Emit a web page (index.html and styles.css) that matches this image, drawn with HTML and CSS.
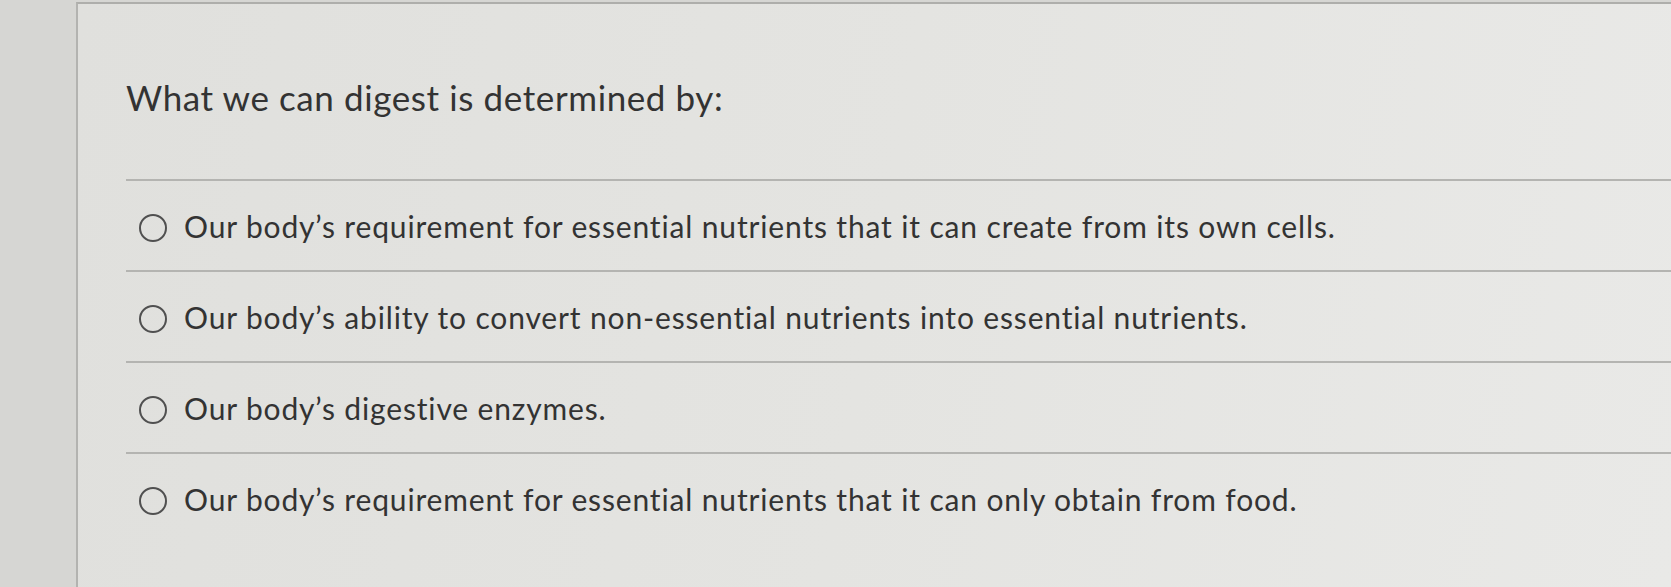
FILE: index.html
```html
<!DOCTYPE html>
<html lang="en">
<head>
<meta charset="utf-8">
<title>Question</title>
<link rel="stylesheet" href="styles.css">
</head>
<body>
<div class="page">
  <div class="panel">
    <h1 class="question">What we can digest is determined by:</h1>
    <ul class="options">
      <li class="option"><span class="radio"></span><span class="label">Our body’s requirement for essential nutrients that it can create from its own cells.</span></li>
      <li class="option"><span class="radio"></span><span class="label">Our body’s ability to convert non-essential nutrients into essential nutrients.</span></li>
      <li class="option"><span class="radio"></span><span class="label">Our body’s digestive enzymes.</span></li>
      <li class="option"><span class="radio"></span><span class="label">Our body’s requirement for essential nutrients that it can only obtain from food.</span></li>
    </ul>
  </div>
</div>
</body>
</html>
```

FILE: styles.css
```css
html, body {
  margin: 0;
  padding: 0;
  height: 100%;
}
body {
  background: #d6d6d3;
  font-family: Lato, "Liberation Sans", sans-serif;
  color: #333333;
  overflow: hidden;
}
.page {
  padding: 2px 0 0 76px;
  height: 100%;
  box-sizing: border-box;
}
.panel {
  height: 100%;
  background: linear-gradient(100deg, #e0e0dd 0%, #e4e4e1 50%, #e9e9e7 100%);
  border-left: 2px solid #b3b3b0;
  border-top: 2px solid #aeaeab;
  padding: 0 0 0 48px;
  box-sizing: border-box;
}
.question {
  margin: 0 0 61px 0;
  padding-top: 72px;
  font-size: 35px;
  line-height: 42px;
  font-weight: 400;
  letter-spacing: 0.6px;
  color: #333333;
}
.options {
  list-style: none;
  margin: 0;
  padding: 0;
}
.option {
  display: flex;
  align-items: center;
  gap: 17px;
  height: 91px;
  border-top: 2px solid #b4b4b1;
  box-sizing: border-box;
  padding: 0 0 0 13px;
}
.radio {
  flex: none;
  width: 24px;
  height: 24px;
  border: 2px solid #505050;
  border-radius: 50%;
  margin-top: 5px;
}
.label {
  font-size: 30px;
  line-height: 34px;
  letter-spacing: 0.85px;
  color: #333333;
}
```
